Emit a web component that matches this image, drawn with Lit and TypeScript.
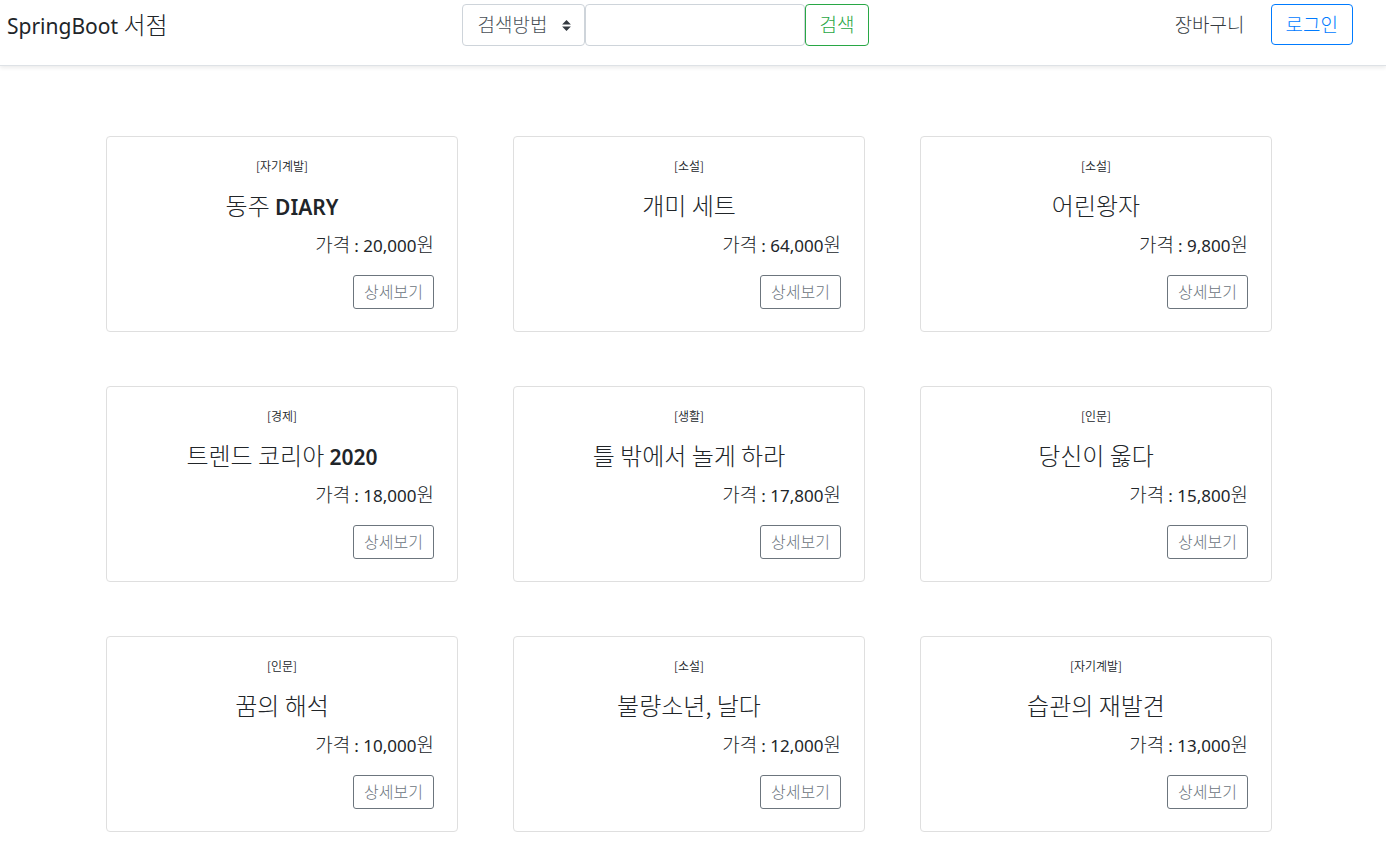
import { LitElement, html, css } from "lit";
import { customElement, property, state } from "lit/decorators.js";

interface Book {
  category: string;
  title: string;
  price: number;
}

const BOOKS: Book[] = [
  { category: "자기계발", title: "동주 DIARY", price: 20000 },
  { category: "소설", title: "개미 세트", price: 64000 },
  { category: "소설", title: "어린왕자", price: 9800 },
  { category: "경제", title: "트렌드 코리아 2020", price: 18000 },
  { category: "생활", title: "틀 밖에서 놀게 하라", price: 17800 },
  { category: "인문", title: "당신이 옳다", price: 15800 },
  { category: "인문", title: "꿈의 해석", price: 10000 },
  { category: "소설", title: "불량소년, 날다", price: 12000 },
  { category: "자기계발", title: "습관의 재발견", price: 13000 },
];

// Latin words and digits are set a little smaller than the Hangul beside them.
const mixed = (text: string) =>
  text
    .split(/([A-Za-z0-9]+)/)
    .map((part) => (/^[A-Za-z0-9]/.test(part) ? html`<span class="latin">${part}</span>` : part));

@customElement("book-card")
export class BookCard extends LitElement {
  @property({ attribute: false }) book!: Book;

  static styles = css`
    :host {
      display: block;
      box-sizing: border-box;
      padding: 20px 23px 22px;
      border: 1px solid #dfdfdf;
      border-radius: 4px;
      background: #fff;
      text-align: right;
    }
    .category {
      margin: 0 0 16px;
      font-size: 12px;
      font-weight: 350;
      line-height: 18px;
      text-align: center;
    }
    .title {
      margin: 0 0 12px;
      font-size: 24px;
      font-weight: 300;
      line-height: 28px;
      text-align: center;
    }
    .title .latin {
      font-size: 21px;
      font-weight: 600;
    }
    .price {
      margin: 0 0 18px;
      font-size: 19px;
      line-height: 26px;
    }
    .price .latin {
      font-size: 17px;
      font-weight: 400;
    }
    .latin {
      font-family: "Noto Sans", sans-serif;
      line-height: 1;
    }
    .detail {
      display: inline-block;
      height: 34px;
      padding: 0 10px 2px;
      border: 1px solid #6c757d;
      border-radius: 3px;
      background: transparent;
      color: #6c757d;
      font: inherit;
      font-size: 16px;
      line-height: 30px;
      vertical-align: top;
      cursor: pointer;
    }
    .detail:hover {
      background: #6c757d;
      color: #fff;
    }
  `;

  render() {
    const { category, title, price } = this.book;
    return html`
      <p class="category">[${category}]</p>
      <h2 class="title">${mixed(title)}</h2>
      <p class="price">가격 <span class="latin">: ${price.toLocaleString("en-US")}</span>원</p>
      <button class="detail" type="button">상세보기</button>
    `;
  }
}

@customElement("app-root")
export class AppRoot extends LitElement {
  @state() private books = BOOKS;

  static styles = css`
    :host {
      display: block;
      min-height: 100vh;
      background: #fff;
      color: #212529;
      font-family: "Noto Sans CJK KR", sans-serif;
      font-weight: 300;
    }
    .header {
      display: grid;
      grid-template-columns: 1fr auto 1fr;
      align-items: start;
      padding: 4px 33px 19px 7px;
      border-bottom: 1px solid #dee2e6;
      box-shadow: 0 2px 4px rgba(0, 0, 0, 0.08);
    }
    .brand {
      color: #212529;
      font-size: 24px;
      line-height: 40px;
      text-decoration: none;
    }
    .brand .latin {
      font-family: "Noto Sans", sans-serif;
      font-size: 21px;
      font-weight: 400;
      line-height: 1;
    }
    .search {
      display: flex;
      margin-right: 29px;
    }
    .method,
    .keyword,
    .submit {
      box-sizing: border-box;
      height: 42px;
      margin: 0;
      border: 1px solid #ced4da;
      border-radius: 4px;
      font: inherit;
      font-size: 19px;
      color: #495057;
    }
    .method {
      width: 123px;
      padding: 0 30px 4px 15px;
      appearance: none;
      background: #fff
        url("data:image/svg+xml,%3csvg xmlns='http://www.w3.org/2000/svg' viewBox='0 0 4 5'%3e%3cpath fill='%23343a40' d='M2 0L0 2h4zm0 5L0 3h4z'/%3e%3c/svg%3e")
        no-repeat right 13px center / 9px 11px;
    }
    .keyword {
      width: 220px;
      padding: 0 13px;
      background: #fff;
    }
    .submit {
      padding: 0 14px 4px;
      border-color: #28a745;
      background: transparent;
      color: #28a745;
      cursor: pointer;
    }
    .nav {
      display: flex;
      justify-content: flex-end;
      align-items: center;
      gap: 26px;
      font-size: 19px;
    }
    .cart,
    .login {
      padding: 0 0 2px;
      line-height: 37px;
      text-decoration: none;
    }
    .cart {
      color: #343a40;
    }
    .login {
      padding: 0 14px 2px;
      border: 1px solid #007bff;
      border-radius: 4px;
      color: #007bff;
    }
    .books {
      display: grid;
      grid-template-columns: repeat(3, 1fr);
      gap: 54px 55px;
      box-sizing: border-box;
      max-width: 1254px;
      margin: 0 auto;
      padding: 70px 48px 31px 40px;
    }
    @media (max-width: 900px) {
      .header {
        grid-template-columns: 1fr auto;
        row-gap: 12px;
      }
      .search {
        grid-row: 2;
        grid-column: 1 / -1;
        margin-right: 0;
      }
      .books {
        grid-template-columns: 1fr;
      }
    }
  `;

  render() {
    return html`
      <header class="header">
        <a class="brand" href="#"><span class="latin">SpringBoot</span> 서점</a>
        <form class="search" @submit=${(e: Event) => e.preventDefault()}>
          <select class="method" aria-label="검색방법">
            <option>검색방법</option>
          </select>
          <input class="keyword" type="text" aria-label="검색어" />
          <button class="submit" type="submit">검색</button>
        </form>
        <nav class="nav">
          <a class="cart" href="#">장바구니</a>
          <a class="login" href="#">로그인</a>
        </nav>
      </header>
      <main class="books">
        ${this.books.map((book) => html`<book-card .book=${book}></book-card>`)}
      </main>
    `;
  }
}
